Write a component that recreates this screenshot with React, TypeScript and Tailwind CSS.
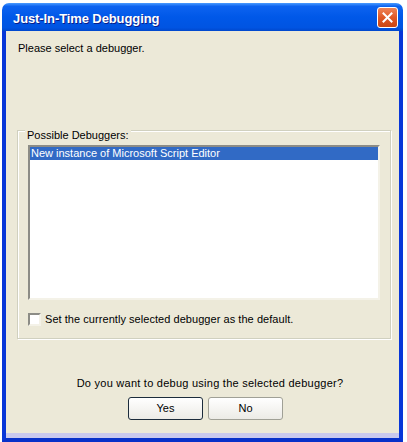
const font = { fontFamily: '"Liberation Sans", Arial, sans-serif' };

const CloseButton = () => (
  <div className="flex h-[21px] w-[21px] items-center justify-center rounded-[3px] border border-white bg-gradient-to-b from-[#ee8356] via-[#df5826] to-[#c94512]">
    <svg width="11" height="11" viewBox="0 0 11 11">
      <path d="M1.5 1.5 L9.5 9.5 M9.5 1.5 L1.5 9.5" stroke="white" strokeWidth="2" strokeLinecap="square" />
    </svg>
  </div>
);

const App = () => {
  return (
    <div className="h-[442px] w-[407px] bg-white pl-[2px] pt-[3px] text-[11px] text-black" style={font}>
      <div className="flex h-[439px] w-[401px] flex-col">
        {/* title bar */}
        <div className="flex h-[28px] shrink-0 items-center justify-between rounded-t-[7px] bg-[linear-gradient(to_bottom,#4a9bff_0%,#0d63f0_12%,#0058e8_50%,#0054e2_88%,#0047cc_100%)] pl-[11px] pr-[5px]">
          <span className="pt-[3px] text-[13px] font-bold leading-[16px] tracking-[-0.1px] text-white [text-shadow:1px_1px_0_#0a1e8a]">
            Just-In-Time Debugging
          </span>
          <div className="mt-[1px]"><CloseButton /></div>
        </div>

        {/* window body */}
        <div className="flex flex-1 flex-col border-x-4 border-b-4 border-x-[#0836d8] border-b-[#0831c9] bg-[#ece9d8]">
          <p className="pl-[12px] pt-[11px] leading-[13px]">Please select a debugger.</p>

          <section className="ml-[11px] mt-[75px] h-[209px] w-[374px] border border-[#d0d0bf] shadow-[inset_1px_1px_0_#fff,1px_1px_0_#fff]">
            <p className="-mt-[2px] ml-[7px] w-fit bg-[#ece9d8] px-[2px] leading-[13px]">Possible Debuggers:</p>

            <div className="ml-[10px] mt-[3px] h-[155px] w-[352px] border-2 border-b-[#f4f2e8] border-l-[#8c8c86] border-r-[#f4f2e8] border-t-[#8c8c86] bg-white">
              <div className="h-[13px] bg-[#316ac5] pl-[1px] leading-[13px] text-white">
                New instance of Microsoft Script Editor
              </div>
            </div>

            <label className="ml-[10px] mt-[13px] flex items-center gap-[4px]">
              <span className="h-[13px] w-[13px] border-2 border-b-[#f4f2e8] border-l-[#8c8c86] border-r-[#f4f2e8] border-t-[#8c8c86] bg-white" />
              <span className="leading-[13px] tracking-[0.05px]">Set the currently selected debugger as the default.</span>
            </label>
          </section>

          <p className="mt-[38px] pl-[15px] text-center leading-[13px] tracking-[0.25px]">
            Do you want to debug using the selected debugger?
          </p>

          <div className="ml-[122px] mt-[7px] flex gap-[5px]">
            <button className="h-[23px] w-[75px] rounded-[3px] border border-[#1c2c3c] bg-gradient-to-b from-white to-[#ecebe6] leading-[13px]">
              Yes
            </button>
            <button className="h-[23px] w-[75px] rounded-[3px] border border-[#a0a096] bg-gradient-to-b from-white to-[#ecebe6] leading-[13px]">
              No
            </button>
          </div>

          <div className="mt-auto h-[5px] bg-[#c9c9ee]" />
        </div>
      </div>
    </div>
  );
};

export default App;
